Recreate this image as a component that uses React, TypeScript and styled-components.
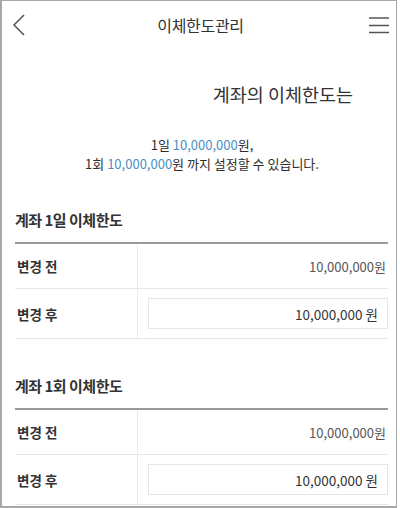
import React from 'react';
import styled, { createGlobalStyle } from 'styled-components';

const GlobalStyle = createGlobalStyle`
  html, body {
    margin: 0;
    padding: 0;
    background: #fff;
  }
  body {
    font-family: "Noto Sans CJK KR", "Noto Sans", sans-serif;
    color: #333;
  }
`;

const Frame = styled.div`
  box-sizing: border-box;
  width: 397px;
  height: 508px;
  border: 1px solid #a8a8a8;
  border-left-width: 2px;
  border-bottom-width: 2px;
  overflow: hidden;
  background: #fff;
`;

const Header = styled.header`
  height: 47px;
  display: flex;
  align-items: center;
  justify-content: space-between;
  padding: 0 7px 0 10px;
`;

const IconButton = styled.button<{ end?: boolean }>`
  width: 24px;
  height: 24px;
  padding: 0;
  border: none;
  background: none;
  display: flex;
  align-items: center;
  justify-content: ${(p) => (p.end ? 'flex-end' : 'flex-start')};
`;

const Title = styled.h1`
  margin: 0;
  font-size: 16px;
  font-weight: 400;
  color: #333;
  letter-spacing: -0.3px;
`;

const Intro = styled.section`
  display: flex;
  flex-direction: column;
`;

const Heading = styled.h2`
  margin: 32px 0 0;
  align-self: flex-end;
  padding-right: 43px;
  font-size: 18.5px;
  font-weight: 400;
  line-height: 28px;
  color: #333;
`;

const Desc = styled.div`
  margin-top: 27px;
  padding-left: 6px;
  display: flex;
  flex-direction: column;
  align-items: center;
`;

const DescLine = styled.p`
  margin: 0;
  font-size: 13px;
  line-height: 19px;
  color: #2e2e2e;
`;

const Blue = styled.span`
  color: #4a8fc4;
`;

const Section = styled.section<{ first?: boolean }>`
  margin: ${(p) => (p.first ? '35px' : '35px')} 8px 0 13px;
`;

const SectionTitle = styled.h3`
  margin: 0 0 10px;
  font-size: 15px;
  font-weight: 700;
  line-height: 24px;
  letter-spacing: -0.5px;
  color: #333;
`;

const Table = styled.div`
  border-top: 2px solid #9a9a9a;
`;

const Row = styled.div<{ tall?: boolean }>`
  display: grid;
  grid-template-columns: 123px 1fr;
  height: ${(p) => (p.tall ? '49px' : '44px')};
  border-bottom: 1px solid #e6e6e6;
`;

const Label = styled.div`
  display: flex;
  align-items: center;
  padding-left: 2px;
  font-size: 13.5px;
  font-weight: 700;
  color: #333;
  border-right: 1px solid #ececec;
`;

const Value = styled.div`
  display: flex;
  align-items: center;
  justify-content: flex-end;
  padding-right: 2px;
  font-size: 13px;
  color: #555;
`;

const InputCell = styled.div`
  display: flex;
  align-items: center;
  padding-left: 10px;
`;

const AmountBox = styled.div`
  box-sizing: border-box;
  width: 100%;
  height: 31px;
  border: 1px solid #e6e6e6;
  display: flex;
  align-items: center;
  justify-content: flex-end;
  padding-right: 9px;
  font-size: 13.5px;
  color: #333;
`;

const Limit: React.FC<{ title: string; first?: boolean }> = ({ title, first }) => (
  <Section first={first}>
    <SectionTitle>{title}</SectionTitle>
    <Table>
      <Row>
        <Label>변경 전</Label>
        <Value>10,000,000원</Value>
      </Row>
      <Row tall>
        <Label>변경 후</Label>
        <InputCell>
          <AmountBox>10,000,000 원</AmountBox>
        </InputCell>
      </Row>
    </Table>
  </Section>
);

const App: React.FC = () => (
  <>
    <GlobalStyle />
    <Frame>
      <Header>
        <IconButton aria-label="back">
          <svg width="13" height="22" viewBox="0 0 13 22">
            <polyline points="12,1 2,11 12,21" fill="none" stroke="#555" strokeWidth="1.5" />
          </svg>
        </IconButton>
        <Title>이체한도관리</Title>
        <IconButton aria-label="menu" end>
          <svg width="20" height="18" viewBox="0 0 20 18">
            <g stroke="#555" strokeWidth="1.5">
              <line x1="0" y1="2" x2="20" y2="2" />
              <line x1="0" y1="9.5" x2="20" y2="9.5" />
              <line x1="0" y1="16.5" x2="20" y2="16.5" />
            </g>
          </svg>
        </IconButton>
      </Header>
      <Intro>
        <Heading>계좌의 이체한도는</Heading>
        <Desc>
          <DescLine>
            1일 <Blue>10,000,000</Blue>원,
          </DescLine>
          <DescLine>
            1회 <Blue>10,000,000</Blue>원 까지 설정할 수 있습니다.
          </DescLine>
        </Desc>
      </Intro>
      <Limit title="계좌 1일 이체한도" first />
      <Limit title="계좌 1회 이체한도" />
    </Frame>
  </>
);

export default App;
